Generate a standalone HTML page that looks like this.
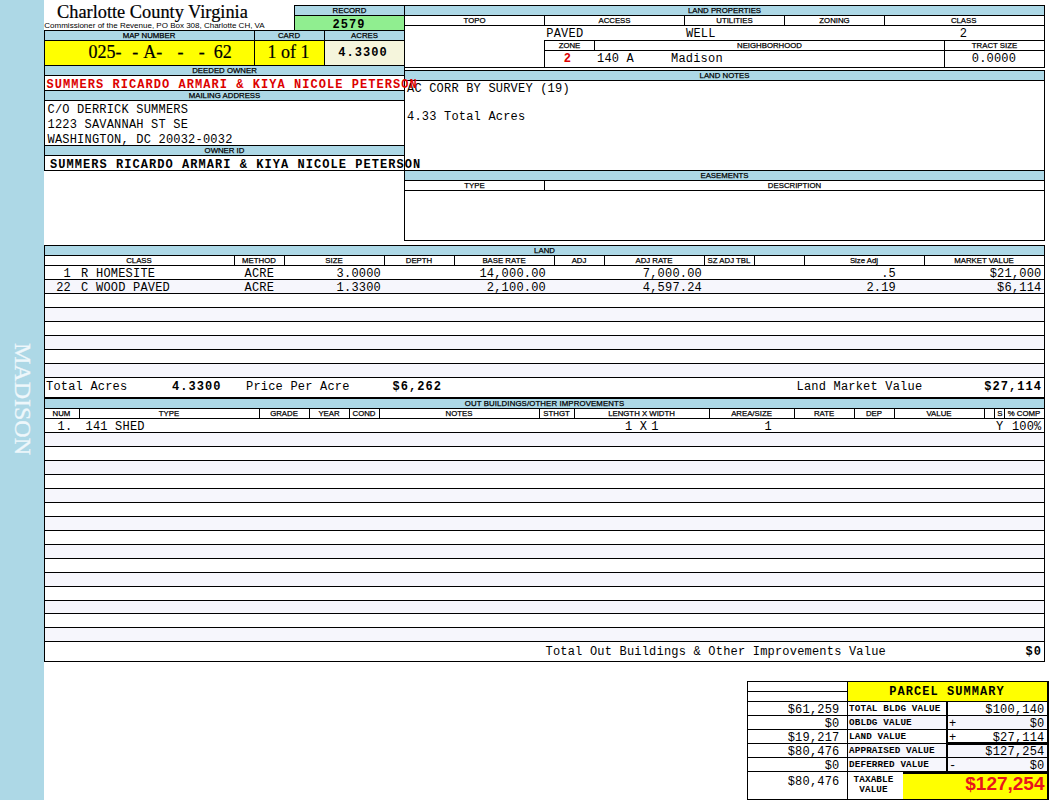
<!DOCTYPE html>
<html><head><meta charset="utf-8"><title>Property Record</title><style>
html,body{margin:0;padding:0;background:#fff}
#p{position:relative;width:1050px;height:800px;overflow:hidden;background:#fff}
.b,.l,.x{position:absolute}
.l{background:#000}
.x{line-height:20px;height:20px;white-space:pre;color:#000}
.m{font-family:"Liberation Mono",monospace}
.s{font-family:"Liberation Sans",sans-serif}
.t,.side{font-family:"Liberation Serif",serif}
.t{-webkit-text-stroke:0.2px #000}
.side{-webkit-text-stroke:0.3px #eef7fb}
.bd{font-weight:bold}
.m{letter-spacing:0.2px}
.m.bd{letter-spacing:1.05px}
.sm{letter-spacing:0.13px !important}
.lab{letter-spacing:0;-webkit-text-stroke:0.25px #000}
</style></head><body><div id="p">
<div class="b" style="left:0px;top:0px;width:44px;height:800px;background:#add8e6"></div>
<div class="x side" style="left:-36.8px;top:387.2px;width:120px;height:24px;line-height:24px;font-size:24px;text-align:center;transform:rotate(90deg);color:#eef7fb">MADISON</div>
<div class="x t" style="left:57.00px;top:1.81px;width:600px;text-align:left;font-size:18.35px;">Charlotte County Virginia</div>
<div class="x s" style="left:44.30px;top:15.63px;width:600px;text-align:left;font-size:8.0px;">Commissioner of the Revenue, PO Box 308, Charlotte CH, VA</div>
<div class="b" style="left:294px;top:5px;width:111px;height:11px;background:#add8e6"></div>
<div class="b" style="left:294px;top:16px;width:111px;height:15px;background:#90ee90"></div>
<div class="l" style="left:294px;top:5px;width:111px;height:1px"></div>
<div class="l" style="left:294px;top:15px;width:111px;height:1px"></div>
<div class="l" style="left:294px;top:5px;width:1px;height:26px"></div>
<div class="x s lab" style="left:199.50px;top:1.40px;width:300px;text-align:center;font-size:7.8px;">RECORD</div>
<div class="x m bd" style="left:299.00px;top:14.81px;width:100px;text-align:center;font-size:12.0px;">2579</div>
<div class="b" style="left:44px;top:30px;width:361px;height:11px;background:#add8e6"></div>
<div class="b" style="left:44px;top:41px;width:281px;height:25px;background:#ffff00"></div>
<div class="b" style="left:325px;top:41px;width:80px;height:25px;background:#f5f5dc"></div>
<div class="b" style="left:44px;top:66px;width:361px;height:10px;background:#add8e6"></div>
<div class="b" style="left:44px;top:91px;width:361px;height:10px;background:#add8e6"></div>
<div class="b" style="left:44px;top:146px;width:361px;height:10px;background:#add8e6"></div>
<div class="l" style="left:44px;top:30px;width:361px;height:1px"></div>
<div class="l" style="left:44px;top:40px;width:361px;height:1px"></div>
<div class="l" style="left:44px;top:65px;width:361px;height:1px"></div>
<div class="l" style="left:44px;top:75px;width:361px;height:1px"></div>
<div class="l" style="left:44px;top:90px;width:361px;height:1px"></div>
<div class="l" style="left:44px;top:100px;width:361px;height:1px"></div>
<div class="l" style="left:44px;top:145px;width:361px;height:1px"></div>
<div class="l" style="left:44px;top:155px;width:361px;height:1px"></div>
<div class="l" style="left:44px;top:170px;width:361px;height:1px"></div>
<div class="l" style="left:44px;top:30px;width:1px;height:141px"></div>
<div class="l" style="left:404px;top:5px;width:1px;height:166px"></div>
<div class="l" style="left:254px;top:30px;width:1px;height:36px"></div>
<div class="l" style="left:324px;top:30px;width:1px;height:36px"></div>
<div class="x s lab" style="left:-1.00px;top:26.40px;width:300px;text-align:center;font-size:7.8px;">MAP NUMBER</div>
<div class="x s lab" style="left:139.00px;top:26.40px;width:300px;text-align:center;font-size:7.8px;">CARD</div>
<div class="x s lab" style="left:214.50px;top:26.40px;width:300px;text-align:center;font-size:7.8px;">ACRES</div>
<div class="x t" style="left:88.50px;top:41.93px;width:600px;text-align:left;font-size:18px;">025-</div>
<div class="x t" style="left:132.20px;top:41.93px;width:600px;text-align:left;font-size:18px;">-</div>
<div class="x t" style="left:143.20px;top:41.93px;width:600px;text-align:left;font-size:18px;">A-</div>
<div class="x t" style="left:177.50px;top:41.93px;width:600px;text-align:left;font-size:18px;">-</div>
<div class="x t" style="left:198.80px;top:41.93px;width:600px;text-align:left;font-size:18px;">-</div>
<div class="x t" style="left:213.80px;top:41.93px;width:600px;text-align:left;font-size:18px;">62</div>
<div class="x t" style="left:238.50px;top:41.93px;width:100px;text-align:center;font-size:18px;">1 of 1</div>
<div class="x m bd" style="left:313.00px;top:42.81px;width:100px;text-align:center;font-size:12.0px;">4.3300</div>
<div class="x s lab" style="left:74.50px;top:61.40px;width:300px;text-align:center;font-size:7.8px;">DEEDED OWNER</div>
<div class="x m bd" style="left:46.50px;top:74.81px;width:600px;text-align:left;font-size:12.0px;color:#dc0000;z-index:5;">SUMMERS RICARDO ARMARI &amp; KIYA NICOLE PETERSON</div>
<div class="x s lab" style="left:74.50px;top:86.40px;width:300px;text-align:center;font-size:7.8px;">MAILING ADDRESS</div>
<div class="x m" style="left:47.50px;top:99.81px;width:600px;text-align:left;font-size:12.0px;">C/O DERRICK SUMMERS</div>
<div class="x m" style="left:47.50px;top:114.81px;width:600px;text-align:left;font-size:12.0px;">1223 SAVANNAH ST SE</div>
<div class="x m" style="left:47.50px;top:129.81px;width:600px;text-align:left;font-size:12.0px;">WASHINGTON, DC 20032-0032</div>
<div class="x s lab" style="left:74.50px;top:141.40px;width:300px;text-align:center;font-size:7.8px;">OWNER ID</div>
<div class="x m bd" style="left:50.00px;top:154.81px;width:600px;text-align:left;font-size:12.0px;z-index:5;">SUMMERS RICARDO ARMARI &amp; KIYA NICOLE PETERSON</div>
<div class="b" style="left:405px;top:6px;width:639px;height:9px;background:#add8e6"></div>
<div class="l" style="left:404px;top:5px;width:641px;height:1px"></div>
<div class="l" style="left:404px;top:15px;width:641px;height:1px"></div>
<div class="l" style="left:404px;top:25px;width:641px;height:1px"></div>
<div class="l" style="left:544px;top:40px;width:501px;height:1px"></div>
<div class="l" style="left:544px;top:50px;width:501px;height:1px"></div>
<div class="l" style="left:404px;top:67px;width:641px;height:1px"></div>
<div class="l" style="left:1044px;top:5px;width:1px;height:63px"></div>
<div class="l" style="left:544px;top:15px;width:1px;height:11px"></div>
<div class="l" style="left:684px;top:15px;width:1px;height:11px"></div>
<div class="l" style="left:784px;top:15px;width:1px;height:11px"></div>
<div class="l" style="left:884px;top:15px;width:1px;height:11px"></div>
<div class="l" style="left:544px;top:40px;width:1px;height:28px"></div>
<div class="l" style="left:594px;top:40px;width:1px;height:11px"></div>
<div class="l" style="left:944px;top:40px;width:1px;height:28px"></div>
<div class="x s lab" style="left:574.50px;top:1.40px;width:300px;text-align:center;font-size:7.8px;">LAND PROPERTIES</div>
<div class="x s lab" style="left:324.50px;top:11.40px;width:300px;text-align:center;font-size:7.8px;">TOPO</div>
<div class="x s lab" style="left:464.50px;top:11.40px;width:300px;text-align:center;font-size:7.8px;">ACCESS</div>
<div class="x s lab" style="left:584.50px;top:11.40px;width:300px;text-align:center;font-size:7.8px;">UTILITIES</div>
<div class="x s lab" style="left:684.50px;top:11.40px;width:300px;text-align:center;font-size:7.8px;">ZONING</div>
<div class="x s lab" style="left:813.70px;top:11.40px;width:300px;text-align:center;font-size:7.8px;">CLASS</div>
<div class="x m" style="left:546.30px;top:23.81px;width:600px;text-align:left;font-size:12.0px;">PAVED</div>
<div class="x m" style="left:686.00px;top:23.81px;width:600px;text-align:left;font-size:12.0px;">WELL</div>
<div class="x m" style="left:938.50px;top:23.81px;width:50px;text-align:center;font-size:12.0px;">2</div>
<div class="x s lab" style="left:419.50px;top:36.40px;width:300px;text-align:center;font-size:7.8px;">ZONE</div>
<div class="x s lab" style="left:619.50px;top:36.40px;width:300px;text-align:center;font-size:7.8px;">NEIGHBORHOOD</div>
<div class="x s lab" style="left:844.50px;top:36.40px;width:300px;text-align:center;font-size:7.8px;">TRACT SIZE</div>
<div class="x m bd" style="left:543.00px;top:48.81px;width:50px;text-align:center;font-size:12.0px;color:#dc0000;">2</div>
<div class="x m" style="left:597.00px;top:48.81px;width:600px;text-align:left;font-size:12.0px;">140 A</div>
<div class="x m" style="left:671.00px;top:48.81px;width:600px;text-align:left;font-size:12.0px;">Madison</div>
<div class="x m" style="left:416.20px;top:48.81px;width:600px;text-align:right;font-size:12.0px;">0.0000</div>
<div class="b" style="left:405px;top:71px;width:639px;height:9px;background:#add8e6"></div>
<div class="l" style="left:404px;top:70px;width:641px;height:1px"></div>
<div class="l" style="left:404px;top:80px;width:641px;height:1px"></div>
<div class="l" style="left:404px;top:70px;width:1px;height:171px"></div>
<div class="l" style="left:1044px;top:70px;width:1px;height:171px"></div>
<div class="x s lab" style="left:574.50px;top:66.40px;width:300px;text-align:center;font-size:7.8px;">LAND NOTES</div>
<div class="x m" style="left:407.00px;top:78.81px;width:600px;text-align:left;font-size:12.0px;">AC CORR BY SURVEY (19)</div>
<div class="x m" style="left:407.00px;top:106.81px;width:600px;text-align:left;font-size:12.0px;">4.33 Total Acres</div>
<div class="b" style="left:405px;top:171px;width:639px;height:9px;background:#add8e6"></div>
<div class="l" style="left:404px;top:170px;width:641px;height:1px"></div>
<div class="l" style="left:404px;top:180px;width:641px;height:1px"></div>
<div class="l" style="left:404px;top:190px;width:641px;height:1px"></div>
<div class="l" style="left:404px;top:240px;width:641px;height:1px"></div>
<div class="l" style="left:544px;top:180px;width:1px;height:11px"></div>
<div class="x s lab" style="left:574.50px;top:166.40px;width:300px;text-align:center;font-size:7.8px;">EASEMENTS</div>
<div class="x s lab" style="left:324.50px;top:176.40px;width:300px;text-align:center;font-size:7.8px;">TYPE</div>
<div class="x s lab" style="left:644.50px;top:176.40px;width:300px;text-align:center;font-size:7.8px;">DESCRIPTION</div>
<div class="b" style="left:45px;top:246px;width:999px;height:9px;background:#add8e6"></div>
<div class="b" style="left:45px;top:280px;width:999px;height:13px;background:#f6f6fc"></div>
<div class="b" style="left:45px;top:308px;width:999px;height:13px;background:#f6f6fc"></div>
<div class="b" style="left:45px;top:336px;width:999px;height:13px;background:#f6f6fc"></div>
<div class="b" style="left:45px;top:364px;width:999px;height:13px;background:#f6f6fc"></div>
<div class="l" style="left:44px;top:245px;width:1001px;height:1px"></div>
<div class="l" style="left:44px;top:255px;width:1001px;height:1px"></div>
<div class="l" style="left:44px;top:265px;width:1001px;height:1px"></div>
<div class="l" style="left:44px;top:279px;width:1001px;height:1px"></div>
<div class="l" style="left:44px;top:293px;width:1001px;height:1px"></div>
<div class="l" style="left:44px;top:307px;width:1001px;height:1px"></div>
<div class="l" style="left:44px;top:321px;width:1001px;height:1px"></div>
<div class="l" style="left:44px;top:335px;width:1001px;height:1px"></div>
<div class="l" style="left:44px;top:349px;width:1001px;height:1px"></div>
<div class="l" style="left:44px;top:363px;width:1001px;height:1px"></div>
<div class="l" style="left:44px;top:377px;width:1001px;height:1px"></div>
<div class="l" style="left:44px;top:397px;width:1001px;height:2px"></div>
<div class="l" style="left:44px;top:245px;width:1px;height:154px"></div>
<div class="l" style="left:1044px;top:245px;width:1px;height:154px"></div>
<div class="l" style="left:234px;top:255px;width:1px;height:11px"></div>
<div class="l" style="left:284px;top:255px;width:1px;height:11px"></div>
<div class="l" style="left:384px;top:255px;width:1px;height:11px"></div>
<div class="l" style="left:454px;top:255px;width:1px;height:11px"></div>
<div class="l" style="left:554px;top:255px;width:1px;height:11px"></div>
<div class="l" style="left:604px;top:255px;width:1px;height:11px"></div>
<div class="l" style="left:704px;top:255px;width:1px;height:11px"></div>
<div class="l" style="left:754px;top:255px;width:1px;height:11px"></div>
<div class="l" style="left:804px;top:255px;width:1px;height:11px"></div>
<div class="l" style="left:924px;top:255px;width:1px;height:11px"></div>
<div class="x s lab" style="left:394.50px;top:241.40px;width:300px;text-align:center;font-size:7.8px;">LAND</div>
<div class="x s lab" style="left:-11.00px;top:251.40px;width:300px;text-align:center;font-size:7.8px;">CLASS</div>
<div class="x s lab" style="left:109.00px;top:251.40px;width:300px;text-align:center;font-size:7.8px;">METHOD</div>
<div class="x s lab" style="left:184.00px;top:251.40px;width:300px;text-align:center;font-size:7.8px;">SIZE</div>
<div class="x s lab" style="left:269.00px;top:251.40px;width:300px;text-align:center;font-size:7.8px;">DEPTH</div>
<div class="x s lab" style="left:354.00px;top:251.40px;width:300px;text-align:center;font-size:7.8px;">BASE RATE</div>
<div class="x s lab" style="left:429.00px;top:251.40px;width:300px;text-align:center;font-size:7.8px;">ADJ</div>
<div class="x s lab" style="left:504.00px;top:251.40px;width:300px;text-align:center;font-size:7.8px;">ADJ RATE</div>
<div class="x s lab" style="left:579.00px;top:251.40px;width:300px;text-align:center;font-size:7.8px;">SZ ADJ TBL</div>
<div class="x s lab" style="left:714.00px;top:251.40px;width:300px;text-align:center;font-size:7.8px;">Size Adj</div>
<div class="x s lab" style="left:834.00px;top:251.40px;width:300px;text-align:center;font-size:7.8px;">MARKET VALUE</div>
<div class="x m" style="left:-529.00px;top:263.81px;width:600px;text-align:right;font-size:12.0px;">1</div>
<div class="x m" style="left:81.00px;top:263.81px;width:600px;text-align:left;font-size:12.0px;">R</div>
<div class="x m" style="left:96.00px;top:263.81px;width:600px;text-align:left;font-size:12.0px;">HOMESITE</div>
<div class="x m" style="left:244.50px;top:263.81px;width:600px;text-align:left;font-size:12.0px;">ACRE</div>
<div class="x m" style="left:-219.00px;top:263.81px;width:600px;text-align:right;font-size:12.0px;">3.0000</div>
<div class="x m" style="left:-54.00px;top:263.81px;width:600px;text-align:right;font-size:12.0px;">14,000.00</div>
<div class="x m" style="left:102.00px;top:263.81px;width:600px;text-align:right;font-size:12.0px;">7,000.00</div>
<div class="x m" style="left:296.00px;top:263.81px;width:600px;text-align:right;font-size:12.0px;">.5</div>
<div class="x m" style="left:441.50px;top:263.81px;width:600px;text-align:right;font-size:12.0px;">$21,000</div>
<div class="x m" style="left:-529.00px;top:277.81px;width:600px;text-align:right;font-size:12.0px;">22</div>
<div class="x m" style="left:81.00px;top:277.81px;width:600px;text-align:left;font-size:12.0px;">C</div>
<div class="x m" style="left:96.00px;top:277.81px;width:600px;text-align:left;font-size:12.0px;">WOOD PAVED</div>
<div class="x m" style="left:244.50px;top:277.81px;width:600px;text-align:left;font-size:12.0px;">ACRE</div>
<div class="x m" style="left:-219.00px;top:277.81px;width:600px;text-align:right;font-size:12.0px;">1.3300</div>
<div class="x m" style="left:-54.00px;top:277.81px;width:600px;text-align:right;font-size:12.0px;">2,100.00</div>
<div class="x m" style="left:102.00px;top:277.81px;width:600px;text-align:right;font-size:12.0px;">4,597.24</div>
<div class="x m" style="left:296.00px;top:277.81px;width:600px;text-align:right;font-size:12.0px;">2.19</div>
<div class="x m" style="left:441.50px;top:277.81px;width:600px;text-align:right;font-size:12.0px;">$6,114</div>
<div class="x m" style="left:46.00px;top:377.31px;width:600px;text-align:left;font-size:12.0px;">Total Acres</div>
<div class="x m bd" style="left:172.00px;top:377.31px;width:600px;text-align:left;font-size:12.0px;">4.3300</div>
<div class="x m" style="left:246.00px;top:377.31px;width:600px;text-align:left;font-size:12.0px;">Price Per Acre</div>
<div class="x m bd" style="left:392.50px;top:377.31px;width:600px;text-align:left;font-size:12.0px;">$6,262</div>
<div class="x m" style="left:796.50px;top:377.31px;width:600px;text-align:left;font-size:12.0px;">Land Market Value</div>
<div class="x m bd" style="left:442.00px;top:377.31px;width:600px;text-align:right;font-size:12.0px;">$27,114</div>
<div class="b" style="left:45px;top:399px;width:999px;height:9px;background:#add8e6"></div>
<div class="b" style="left:45px;top:433px;width:999px;height:13px;background:#f6f6fc"></div>
<div class="b" style="left:45px;top:461px;width:999px;height:13px;background:#f6f6fc"></div>
<div class="b" style="left:45px;top:489px;width:999px;height:13px;background:#f6f6fc"></div>
<div class="b" style="left:45px;top:517px;width:999px;height:13px;background:#f6f6fc"></div>
<div class="b" style="left:45px;top:545px;width:999px;height:13px;background:#f6f6fc"></div>
<div class="b" style="left:45px;top:573px;width:999px;height:13px;background:#f6f6fc"></div>
<div class="b" style="left:45px;top:601px;width:999px;height:12px;background:#f6f6fc"></div>
<div class="b" style="left:45px;top:628px;width:999px;height:13px;background:#f6f6fc"></div>
<div class="l" style="left:44px;top:408px;width:1001px;height:1px"></div>
<div class="l" style="left:44px;top:418px;width:1001px;height:1px"></div>
<div class="l" style="left:44px;top:432px;width:1001px;height:1px"></div>
<div class="l" style="left:44px;top:446px;width:1001px;height:1px"></div>
<div class="l" style="left:44px;top:460px;width:1001px;height:1px"></div>
<div class="l" style="left:44px;top:474px;width:1001px;height:1px"></div>
<div class="l" style="left:44px;top:488px;width:1001px;height:1px"></div>
<div class="l" style="left:44px;top:502px;width:1001px;height:1px"></div>
<div class="l" style="left:44px;top:516px;width:1001px;height:1px"></div>
<div class="l" style="left:44px;top:530px;width:1001px;height:1px"></div>
<div class="l" style="left:44px;top:544px;width:1001px;height:1px"></div>
<div class="l" style="left:44px;top:558px;width:1001px;height:1px"></div>
<div class="l" style="left:44px;top:572px;width:1001px;height:1px"></div>
<div class="l" style="left:44px;top:586px;width:1001px;height:1px"></div>
<div class="l" style="left:44px;top:600px;width:1001px;height:1px"></div>
<div class="l" style="left:44px;top:613px;width:1001px;height:1px"></div>
<div class="l" style="left:44px;top:627px;width:1001px;height:1px"></div>
<div class="l" style="left:44px;top:641px;width:1001px;height:1px"></div>
<div class="l" style="left:44px;top:661px;width:1001px;height:1px"></div>
<div class="l" style="left:44px;top:399px;width:1px;height:263px"></div>
<div class="l" style="left:1044px;top:399px;width:1px;height:263px"></div>
<div class="l" style="left:79px;top:408px;width:1px;height:11px"></div>
<div class="l" style="left:259px;top:408px;width:1px;height:11px"></div>
<div class="l" style="left:309px;top:408px;width:1px;height:11px"></div>
<div class="l" style="left:349px;top:408px;width:1px;height:11px"></div>
<div class="l" style="left:379px;top:408px;width:1px;height:11px"></div>
<div class="l" style="left:539px;top:408px;width:1px;height:11px"></div>
<div class="l" style="left:574px;top:408px;width:1px;height:11px"></div>
<div class="l" style="left:709px;top:408px;width:1px;height:11px"></div>
<div class="l" style="left:794px;top:408px;width:1px;height:11px"></div>
<div class="l" style="left:854px;top:408px;width:1px;height:11px"></div>
<div class="l" style="left:894px;top:408px;width:1px;height:11px"></div>
<div class="l" style="left:984px;top:408px;width:1px;height:11px"></div>
<div class="l" style="left:994px;top:408px;width:1px;height:11px"></div>
<div class="l" style="left:1004px;top:408px;width:1px;height:11px"></div>
<div class="x s lab" style="left:394.50px;top:394.40px;width:300px;text-align:center;font-size:7.8px;letter-spacing:0.13px;">OUT BUILDINGS/OTHER IMPROVEMENTS</div>
<div class="x s lab" style="left:-88.50px;top:404.40px;width:300px;text-align:center;font-size:7.8px;">NUM</div>
<div class="x s lab" style="left:19.00px;top:404.40px;width:300px;text-align:center;font-size:7.8px;">TYPE</div>
<div class="x s lab" style="left:134.00px;top:404.40px;width:300px;text-align:center;font-size:7.8px;">GRADE</div>
<div class="x s lab" style="left:179.00px;top:404.40px;width:300px;text-align:center;font-size:7.8px;">YEAR</div>
<div class="x s lab" style="left:214.00px;top:404.40px;width:300px;text-align:center;font-size:7.8px;">COND</div>
<div class="x s lab" style="left:309.00px;top:404.40px;width:300px;text-align:center;font-size:7.8px;">NOTES</div>
<div class="x s lab" style="left:406.50px;top:404.40px;width:300px;text-align:center;font-size:7.8px;">STHGT</div>
<div class="x s lab" style="left:491.50px;top:404.40px;width:300px;text-align:center;font-size:7.8px;">LENGTH X WIDTH</div>
<div class="x s lab" style="left:601.50px;top:404.40px;width:300px;text-align:center;font-size:7.8px;">AREA/SIZE</div>
<div class="x s lab" style="left:674.00px;top:404.40px;width:300px;text-align:center;font-size:7.8px;">RATE</div>
<div class="x s lab" style="left:724.00px;top:404.40px;width:300px;text-align:center;font-size:7.8px;">DEP</div>
<div class="x s lab" style="left:789.00px;top:404.40px;width:300px;text-align:center;font-size:7.8px;">VALUE</div>
<div class="x s lab" style="left:849.80px;top:404.40px;width:300px;text-align:center;font-size:7.8px;">S</div>
<div class="x s lab" style="left:874.00px;top:404.40px;width:300px;text-align:center;font-size:7.8px;">% COMP</div>
<div class="x m" style="left:57.50px;top:416.81px;width:600px;text-align:left;font-size:12.0px;">1.</div>
<div class="x m" style="left:85.50px;top:416.81px;width:600px;text-align:left;font-size:12.0px;">141 SHED</div>
<div class="x m" style="left:625.00px;top:416.81px;width:600px;text-align:left;font-size:12.0px;">1 X</div>
<div class="x m" style="left:651.20px;top:416.81px;width:600px;text-align:left;font-size:12.0px;">1</div>
<div class="x m" style="left:172.00px;top:416.81px;width:600px;text-align:right;font-size:12.0px;">1</div>
<div class="x m" style="left:996.00px;top:416.81px;width:600px;text-align:left;font-size:12.0px;">Y</div>
<div class="x m" style="left:441.50px;top:416.81px;width:600px;text-align:right;font-size:12.0px;">100%</div>
<div class="x m" style="left:545.50px;top:641.81px;width:600px;text-align:left;font-size:12.0px;">Total Out Buildings &amp; Other Improvements Value</div>
<div class="x m bd" style="left:442.00px;top:641.81px;width:600px;text-align:right;font-size:12.0px;">$0</div>
<div class="b" style="left:848px;top:682px;width:199px;height:19px;background:#ffff00"></div>
<div class="b" style="left:903px;top:773px;width:144px;height:26px;background:#ffff00"></div>
<div class="b" style="left:848px;top:716px;width:199px;height:13px;background:#f6f6fc"></div>
<div class="b" style="left:848px;top:744px;width:199px;height:13px;background:#f6f6fc"></div>
<div class="b" style="left:848px;top:758px;width:199px;height:13px;background:#f6f6fc"></div>
<div class="l" style="left:747px;top:681px;width:301px;height:1px"></div>
<div class="l" style="left:747px;top:691px;width:101px;height:1px"></div>
<div class="l" style="left:747px;top:701px;width:301px;height:1px"></div>
<div class="l" style="left:747px;top:715px;width:301px;height:1px"></div>
<div class="l" style="left:747px;top:729px;width:301px;height:1px"></div>
<div class="l" style="left:747px;top:743px;width:301px;height:1px"></div>
<div class="l" style="left:747px;top:757px;width:301px;height:1px"></div>
<div class="l" style="left:747px;top:771px;width:301px;height:1px"></div>
<div class="l" style="left:747px;top:799px;width:301px;height:1px"></div>
<div class="l" style="left:903px;top:771px;width:146px;height:3px"></div>
<div class="l" style="left:948px;top:742px;width:101px;height:3px"></div>
<div class="l" style="left:747px;top:681px;width:1px;height:119px"></div>
<div class="l" style="left:1047px;top:681px;width:2px;height:119px"></div>
<div class="l" style="left:847px;top:681px;width:1px;height:119px"></div>
<div class="l" style="left:946px;top:701px;width:2px;height:71px"></div>
<div class="x m bd" style="left:847.00px;top:681.51px;width:200px;text-align:center;font-size:12.0px;">PARCEL SUMMARY</div>
<div class="x m" style="left:239.50px;top:699.81px;width:600px;text-align:right;font-size:12.0px;">$61,259</div>
<div class="x m bd sm" style="left:849.00px;top:698.53px;width:600px;text-align:left;font-size:9.3px;">TOTAL BLDG VALUE</div>
<div class="x m" style="left:444.50px;top:699.81px;width:600px;text-align:right;font-size:12.0px;">$100,140</div>
<div class="x m" style="left:239.50px;top:713.81px;width:600px;text-align:right;font-size:12.0px;">$0</div>
<div class="x m bd sm" style="left:849.00px;top:712.53px;width:600px;text-align:left;font-size:9.3px;">OBLDG VALUE</div>
<div class="x m" style="left:444.50px;top:713.81px;width:600px;text-align:right;font-size:12.0px;">$0</div>
<div class="x m" style="left:949.00px;top:713.81px;width:600px;text-align:left;font-size:12.0px;">+</div>
<div class="x m" style="left:239.50px;top:727.81px;width:600px;text-align:right;font-size:12.0px;">$19,217</div>
<div class="x m bd sm" style="left:849.00px;top:726.53px;width:600px;text-align:left;font-size:9.3px;">LAND VALUE</div>
<div class="x m" style="left:444.50px;top:727.81px;width:600px;text-align:right;font-size:12.0px;">$27,114</div>
<div class="x m" style="left:949.00px;top:727.81px;width:600px;text-align:left;font-size:12.0px;">+</div>
<div class="x m" style="left:239.50px;top:741.81px;width:600px;text-align:right;font-size:12.0px;">$80,476</div>
<div class="x m bd sm" style="left:849.00px;top:740.53px;width:600px;text-align:left;font-size:9.3px;">APPRAISED VALUE</div>
<div class="x m" style="left:444.50px;top:741.81px;width:600px;text-align:right;font-size:12.0px;">$127,254</div>
<div class="x m" style="left:239.50px;top:755.81px;width:600px;text-align:right;font-size:12.0px;">$0</div>
<div class="x m bd sm" style="left:849.00px;top:754.53px;width:600px;text-align:left;font-size:9.3px;">DEFERRED VALUE</div>
<div class="x m" style="left:444.50px;top:755.81px;width:600px;text-align:right;font-size:12.0px;">$0</div>
<div class="x m" style="left:949.00px;top:755.81px;width:600px;text-align:left;font-size:12.0px;">-</div>
<div class="x m" style="left:239.50px;top:771.81px;width:600px;text-align:right;font-size:12.0px;">$80,476</div>
<div class="x m bd sm" style="left:833.50px;top:769.53px;width:80px;text-align:center;font-size:9.3px;">TAXABLE</div>
<div class="x m bd sm" style="left:833.50px;top:779.53px;width:80px;text-align:center;font-size:9.3px;">VALUE</div>
<div class="x s bd" style="left:444.50px;top:773.91px;width:600px;text-align:right;font-size:19px;color:#e8141c;">$127,254</div>
</div></body></html>
